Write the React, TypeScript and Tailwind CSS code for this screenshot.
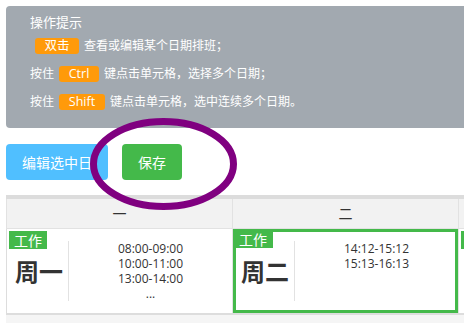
import React from "react";

const FONT = "font-['Open_Sans','Noto_Sans_CJK_SC',sans-serif]";

interface DayCell {
  name: string;
  times: string[];
  selected?: boolean;
}

const DAYS: DayCell[] = [
  { name: "周一", times: ["08:00-09:00", "10:00-11:00", "13:00-14:00", "..."] },
  { name: "周二", times: ["14:12-15:12", "15:13-16:13"], selected: true },
  { name: "周三", times: [] },
];

function Badge({ label, className }: { label: string; className: string }) {
  return (
    <span className={`flex items-center justify-center h-[16px] rounded-[3px] bg-[#ff9a0a] text-white text-[12.5px] ${className}`}>
      {label}
    </span>
  );
}

export default function App() {
  return (
    <div className={`relative w-[464px] h-[323px] overflow-hidden bg-white ${FONT}`}>
      {/* Tips panel */}
      <div className="pl-[6px] pt-[6px]">
        <div className="w-[470px] h-[122px] bg-[#a2a9b0] rounded-l-[4px] pl-[24px] pt-[8px] text-white text-[12px]">
          <div className="h-[18px] flex items-center text-[13px]">操作提示</div>
          <div className="mt-[3px] h-[22px] flex items-center gap-[5px]">
            <Badge label="双击" className="w-[44px] ml-[5px]" />
            <span>查看或编辑某个日期排班；</span>
          </div>
          <div className="mt-[6px] h-[22px] flex items-center gap-[5px]">
            <span>按住</span>
            <Badge label="Ctrl" className="w-[40px]" />
            <span>键点击单元格，选择多个日期；</span>
          </div>
          <div className="mt-[6px] h-[22px] flex items-center gap-[5px]">
            <span>按住</span>
            <Badge label="Shift" className="w-[46px]" />
            <span>键点击单元格，选中连续多个日期。</span>
          </div>
        </div>
      </div>

      {/* Actions */}
      <div className="mt-[16px] ml-[6px] flex gap-[14px]">
        <button className="w-[102px] h-[36px] rounded-[4px] bg-[#50bfff] text-white text-[14px]">编辑选中日</button>
        <button className="w-[60px] h-[36px] rounded-[4px] bg-[#44b94a] text-white text-[14px]">保存</button>
      </div>

      {/* Week table */}
      <div className="mt-[15px] ml-[6px] w-[700px] border-t-4 border-[#dcdcdc]">
        <div className="flex border-l border-b border-[#e2e2e2] bg-[#f2f2f2]">
          {["一", "二", "三"].map(h => (
            <div key={h} className="w-[226px] h-[29px] shrink-0 border-r border-[#e2e2e2] flex items-center justify-center text-[14px] text-[#333]">
              {h}
            </div>
          ))}
        </div>
        <div className="flex border-l border-b-2 border-[#dddddd]">
          {DAYS.map((d, i) => (
            <div
              key={d.name}
              className={`relative w-[226px] h-[84px] shrink-0 border-r border-[#e2e2e2] flex ${d.selected ? "shadow-[inset_0_0_0_3px_#44b94a]" : ""}`}
            >
              <span
                className={`absolute flex items-center justify-center h-[18px] bg-[#44b94a] text-white text-[14px] ${i === 1 ? "left-0 top-[1px] w-[40px]" : "left-[2px] top-[2px] w-[38px]"}`}
              >
                工作
              </span>
              <div className="w-[61px] shrink-0 flex items-center pl-[8px] pt-[2px] text-[24px] font-bold text-[#333]">
                {d.name}
              </div>
              <div className="self-center w-px h-[60px] bg-[#e2e2e2]" />
              <div className="flex-1 pt-[12px] text-center text-[12px] leading-[15px] text-[#333]">
                {d.times.map(t => (
                  <div key={t}>{t}</div>
                ))}
              </div>
            </div>
          ))}
        </div>
        <div className="h-[10px] bg-[#f5f5f5]" />
      </div>

      {/* Annotation ring */}
      <svg className="absolute left-0 top-0 pointer-events-none" width="464" height="323">
        <ellipse cx="163.5" cy="164" rx="70" ry="42.5" fill="none" stroke="#800080" strokeWidth="7" />
      </svg>
    </div>
  );
}
